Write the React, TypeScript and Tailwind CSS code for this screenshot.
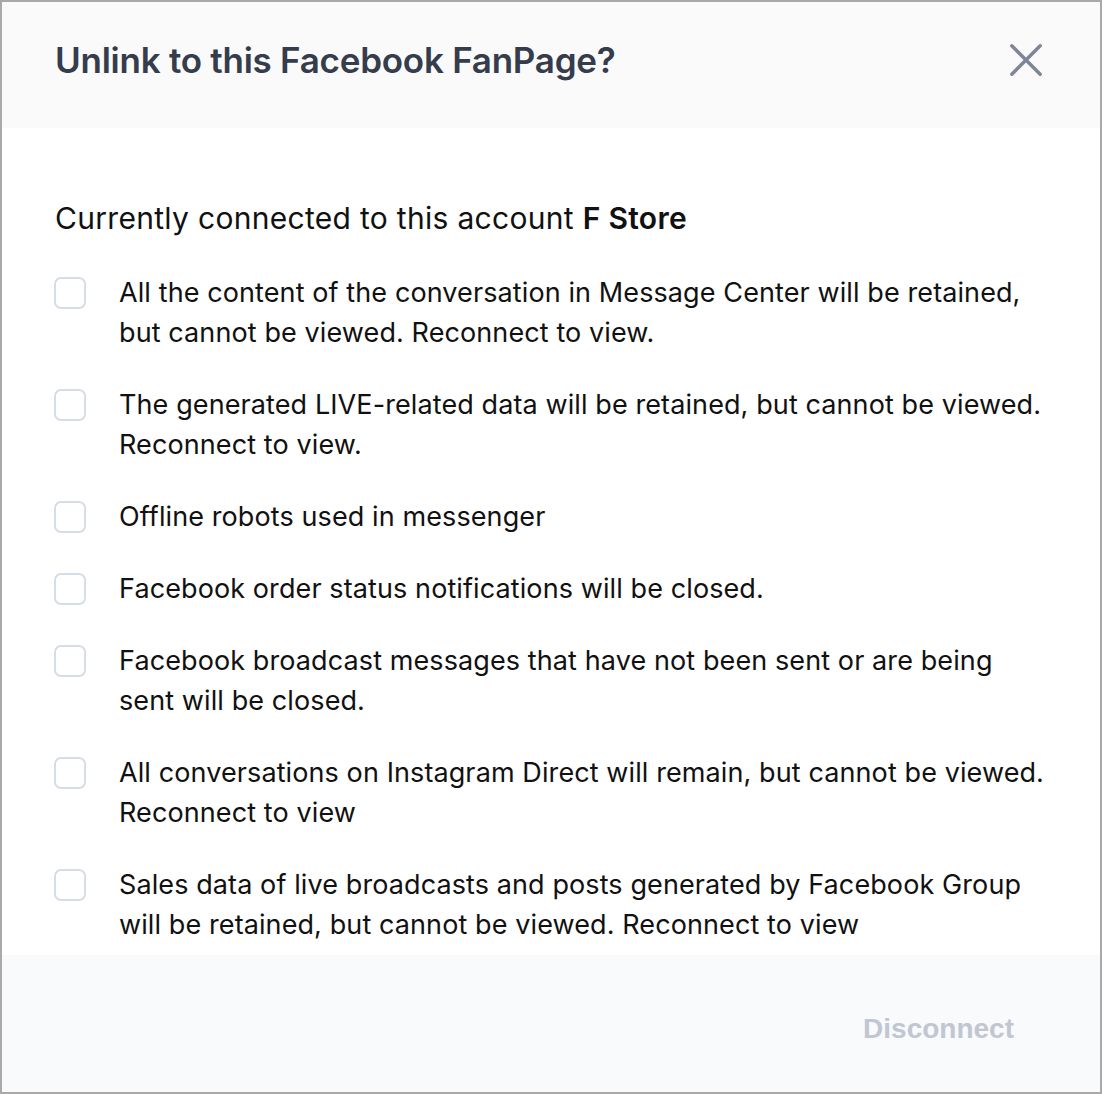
const items = [
  "All the content of the conversation in Message Center will be retained, but cannot be viewed. Reconnect to view.",
  "The generated LIVE-related data will be retained, but cannot be viewed. Reconnect to view.",
  "Offline robots used in messenger",
  "Facebook order status notifications will be closed.",
  "Facebook broadcast messages that have not been sent or are being sent will be closed.",
  "All conversations on Instagram Direct will remain, but cannot be viewed. Reconnect to view",
  "Sales data of live broadcasts and posts generated by Facebook Group will be retained, but cannot be viewed. Reconnect to view",
];

const CloseIcon = () => (
  <svg width="32" height="32" viewBox="0 0 32 32" fill="none">
    <path d="M1.8 1.8L30.2 30.2M30.2 1.8L1.8 30.2" stroke="currentColor" strokeWidth="3.4" strokeLinecap="round" />
  </svg>
);

const App = () => {
  return (
    <div
      className="w-[1102px] h-[1094px] border-2 border-[#a9a9a9] bg-white flex flex-col"
      style={{ fontFamily: "Inter, 'Noto Sans', sans-serif" }}
    >
      <div className="h-[126px] shrink-0 bg-[#fafafa] flex items-center justify-between pl-[53px] pr-[58px] pb-[10px]">
        <h2 className="text-[35px] font-semibold text-[#353c4c] tracking-[-0.25px]">
          Unlink to this Facebook FanPage?
        </h2>
        <button type="button" className="text-[#7d8597]">
          <CloseIcon />
        </button>
      </div>

      <div className="flex-1 pt-[70px] pl-[52px]">
        <p className="text-[30px] leading-[40px] text-[#111111] tracking-[0.3px] pl-[1px]">
          Currently connected to this account <span className="font-semibold">F Store</span>
        </p>
        <div className="mt-[35px] flex flex-col gap-[32px]">
          {items.map((text) => (
            <label key={text} className="flex items-start gap-[33px]">
              <span className="mt-[4px] w-[32px] h-[32px] shrink-0 rounded-[7px] border-2 border-[#d6dde6] bg-white" />
              <span className="text-[27px] leading-[40px] text-[#111111] w-[930px] tracking-[0.1px]">{text}</span>
            </label>
          ))}
        </div>
      </div>

      <div className="h-[137px] shrink-0 bg-[#f9fafb] flex items-center justify-end pr-[86px] pt-[10px]">
        <button
          type="button"
          className="text-[28px] font-bold text-[#c1c7d2]"
          style={{ fontFamily: "'Liberation Sans', Arial, sans-serif" }}
        >
          Disconnect
        </button>
      </div>
    </div>
  );
};

export default App;
